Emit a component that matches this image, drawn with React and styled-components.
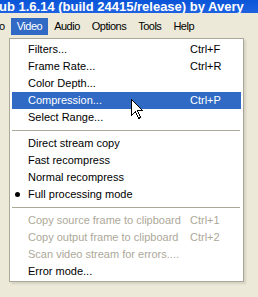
import React from "react";
import styled, { createGlobalStyle } from "styled-components";

const GlobalStyle = createGlobalStyle`
  html, body { margin: 0; padding: 0; background: #ece9d8; overflow: hidden; }
  * { box-sizing: border-box; }
`;

const Window = styled.div`
  position: relative;
  width: 258px;
  height: 297px;
  display: flex;
  flex-direction: column;
  background: #ece9d8;
  overflow: hidden;
  font-family: "Liberation Sans", Arial, sans-serif;
  font-size: 11px;
`;

const TitleBar = styled.div`
  height: 13px;
  background: linear-gradient(#0a55d8, #1d62e0);
  color: #fff;
  font-family: "Liberation Sans", Arial, sans-serif;
  font-weight: bold;
  font-size: 13px;
  line-height: 13px;
  white-space: nowrap;
  overflow: hidden;
  margin-left: -1px;
`;

const MenuBar = styled.div`
  display: flex;
  padding: 5px 0 2px;
  margin-left: -15px;
  letter-spacing: -0.5px;
`;

const BarItem = styled.div`
  height: 17px;
  line-height: 17px;
  padding: 0 6px;
  color: ${(p) => (p.$active ? "#fff" : "#000")};
  background: ${(p) => (p.$active ? "#316ac5" : "transparent")};
  white-space: nowrap;
`;

const Body = styled.div`
  flex: 1;
  padding: 1px 0 0 9px;
`;

const DropMenu = styled.div`
  width: 235px;
  background: #fff;
  border: 1px solid #aca899;
  padding: 2px 2px 1px;
  box-shadow: 2px 2px 2px rgba(0, 0, 0, 0.1);
`;

const Item = styled.div`
  display: grid;
  grid-template-columns: 16px 162px 1fr;
  align-items: center;
  height: 17px;
  line-height: 17px;
  white-space: nowrap;
  color: ${(p) => (p.$active ? "#fff" : p.$disabled ? "#aca899" : "#000")};
  background: ${(p) => (p.$active ? "#316ac5" : "transparent")};
`;

const Mark = styled.span`
  display: flex;
  justify-content: center;
  align-items: center;
  padding-right: 6px;
`;

const Dot = styled.span`
  width: 5px;
  height: 5px;
  border-radius: 50%;
  background: #000;
`;

const Separator = styled.div`
  height: 1px;
  margin: 4px 1px 4px 0;
  background: #aca899;
`;

const Cursor = styled.svg`
  position: absolute;
  left: 131px;
  top: 99px;
  width: 13px;
  height: 21px;
  overflow: visible;
`;

const groups = [
  [
    { label: "Filters...", key: "Ctrl+F" },
    { label: "Frame Rate...", key: "Ctrl+R" },
    { label: "Color Depth..." },
    { label: "Compression...", key: "Ctrl+P", active: true },
    { label: "Select Range..." },
  ],
  [
    { label: "Direct stream copy" },
    { label: "Fast recompress" },
    { label: "Normal recompress" },
    { label: "Full processing mode", checked: true },
  ],
  [
    { label: "Copy source frame to clipboard", key: "Ctrl+1", disabled: true },
    { label: "Copy output frame to clipboard", key: "Ctrl+2", disabled: true },
    { label: "Scan video stream for errors....", disabled: true },
    { label: "Error mode..." },
  ],
];

export default function App() {
  return (
    <>
      <GlobalStyle />
      <Window>
        <TitleBar>ub 1.6.14 (build 24415/release) by Avery</TitleBar>
        <MenuBar>
          <BarItem>Go</BarItem>
          <BarItem $active>Video</BarItem>
          <BarItem>Audio</BarItem>
          <BarItem>Options</BarItem>
          <BarItem>Tools</BarItem>
          <BarItem>Help</BarItem>
        </MenuBar>
        <Body>
          <DropMenu>
            {groups.map((g, gi) => (
              <React.Fragment key={gi}>
                {gi > 0 && <Separator />}
                {g.map((it) => (
                  <Item key={it.label} $active={it.active} $disabled={it.disabled}>
                    <Mark>{it.checked && <Dot />}</Mark>
                    <span>{it.label}</span>
                    <span>{it.key || ""}</span>
                  </Item>
                ))}
              </React.Fragment>
            ))}
          </DropMenu>
        </Body>
        <Cursor viewBox="0 0 13 21">
          <path
            d="M0.5 0.5 L0.5 16.5 L4.5 12.5 L7.5 19.5 L9.5 18.5 L6.5 11.5 L11.5 11.5 Z"
            fill="#fff"
            stroke="#000"
            strokeWidth="1"
            shapeRendering="crispEdges"
          />
        </Cursor>
      </Window>
    </>
  );
}
